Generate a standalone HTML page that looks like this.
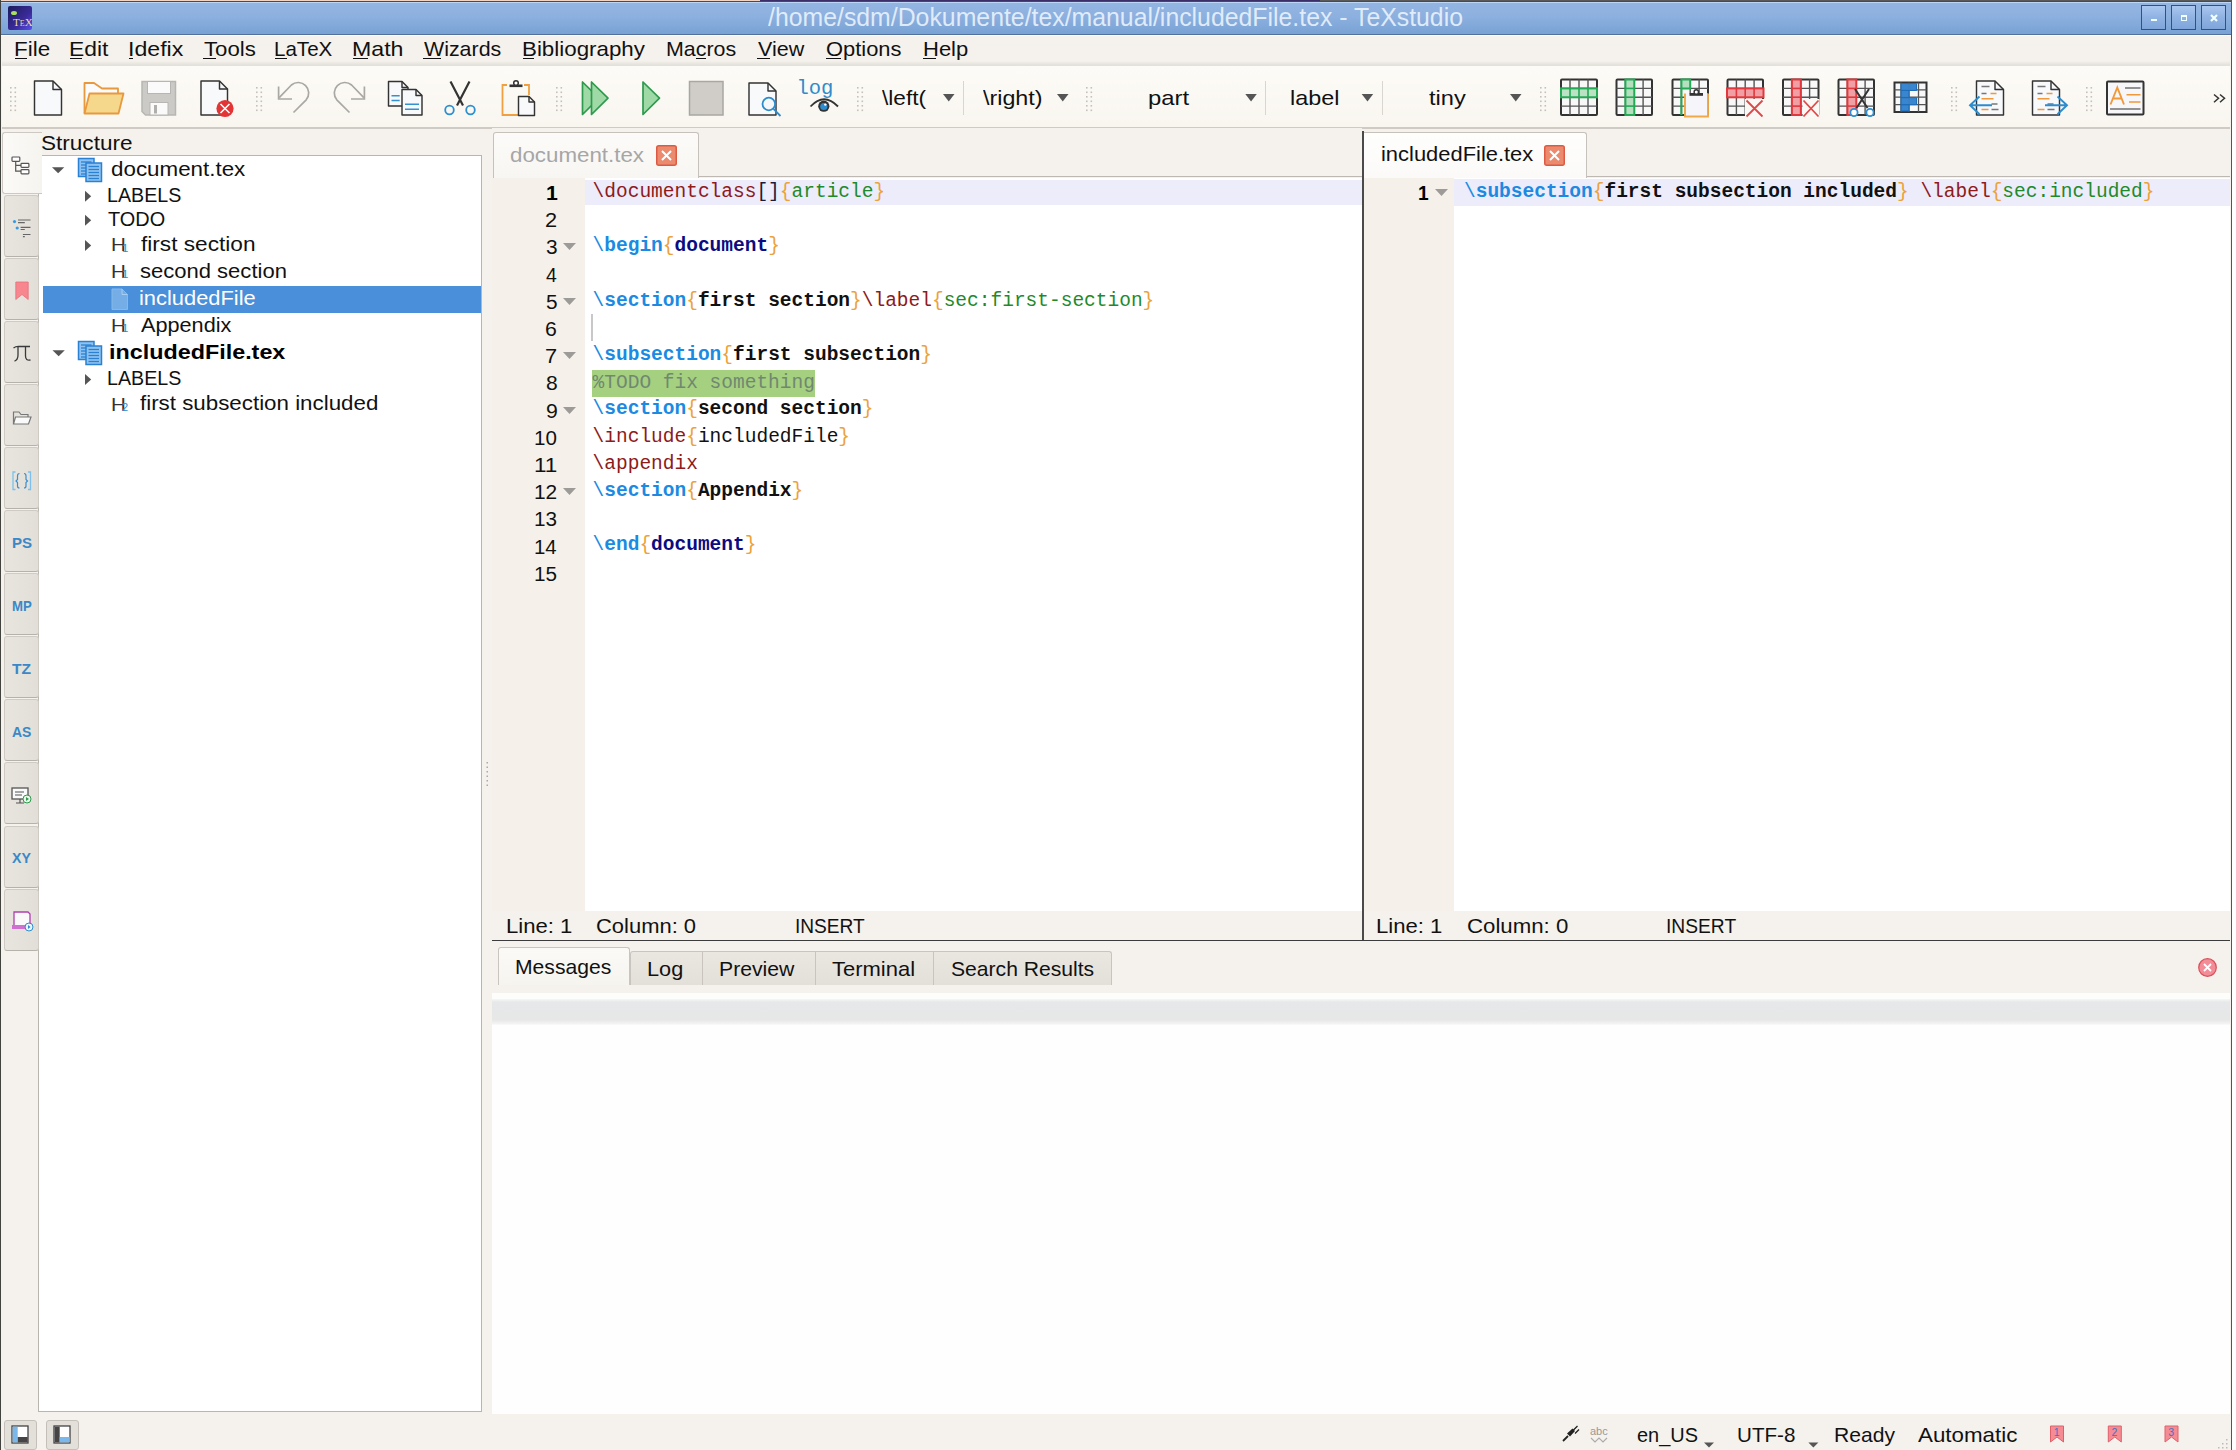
<!DOCTYPE html><html><head><meta charset="utf-8"><style>
html,body{margin:0;padding:0;width:2236px;height:1450px;overflow:hidden;position:relative}
.t{position:absolute;line-height:0;white-space:pre}
</style></head><body>
<div style="position:absolute;left:0px;top:0px;width:2236px;height:1450px;background:#f5f1ec"></div>
<div style="position:absolute;left:2232px;top:0px;width:4px;height:1450px;background:#fff"></div>
<div style="position:absolute;left:0px;top:0px;width:760px;height:1.2px;background:#f2d2c0"></div>
<div style="position:absolute;left:760px;top:0px;width:560px;height:1.2px;background:#3c2e66"></div>
<div style="position:absolute;left:1320px;top:0px;width:912px;height:1.2px;background:#5a5a5a"></div>
<div style="position:absolute;left:0px;top:1.2px;width:2232px;height:1px;background:#4a4a4a"></div>
<div style="position:absolute;left:0px;top:2.2px;width:2232px;height:1px;background:#bcd6f8"></div>
<div style="position:absolute;left:0px;top:3.2px;width:2232px;height:30.8px;background:linear-gradient(#93b5e2,#8cb0df 45%,#78a2d4)"></div>
<div style="position:absolute;left:0px;top:34px;width:2232px;height:1px;background:#52709a"></div>
<div style="position:absolute;left:0px;top:35px;width:2232px;height:1px;background:#fbfdfd"></div>
<div style="position:absolute;left:0px;top:0px;width:1.2px;height:1450px;background:#42423e"></div>
<div style="position:absolute;left:2231px;top:0px;width:1.2px;height:1450px;background:#555552"></div>
<svg style="position:absolute;left:8px;top:6px" width="24" height="24"><defs><linearGradient id="ti" x1="0" y1="0" x2="1" y2="1"><stop offset="0" stop-color="#1c1c5a"/><stop offset="0.6" stop-color="#3a2a9a"/><stop offset="1" stop-color="#5a50f0"/></linearGradient></defs><rect x="0" y="0" width="24" height="24" rx="2" fill="url(#ti)"/><ellipse cx="6" cy="7" rx="3" ry="2" fill="#a8e060"/><text x="5" y="20" font-family="Liberation Serif" font-size="11" fill="#f0d8a0">T<tspan font-size="8">E</tspan>X</text></svg>
<div class="t" style="left:768.00px;top:17.19px;font-family:'Liberation Sans', sans-serif;font-size:26px;color:rgba(244,250,255,0.82);transform:scaleX(0.9548);transform-origin:0 0;">/home/sdm/Dokumente/tex/manual/includedFile.tex - TeXstudio</div>
<div style="position:absolute;left:2141px;top:5px;width:25px;height:25px;box-sizing:border-box;border:1.5px solid #2f5285;background:linear-gradient(#aac6f0,#8fb2e2 50%,#7fa5da)"></div>
<div style="position:absolute;left:2171px;top:5px;width:25px;height:25px;box-sizing:border-box;border:1.5px solid #2f5285;background:linear-gradient(#aac6f0,#8fb2e2 50%,#7fa5da)"></div>
<div style="position:absolute;left:2201px;top:5px;width:25px;height:25px;box-sizing:border-box;border:1.5px solid #2f5285;background:linear-gradient(#aac6f0,#8fb2e2 50%,#7fa5da)"></div>
<div style="position:absolute;left:2150.8px;top:18.9px;width:6.4px;height:2.4px;background:#f0ffff"></div>
<div style="position:absolute;left:2181px;top:15.2px;width:6.2px;height:6px;box-sizing:border-box;border:1.5px solid #f0ffff;border-top-width:2px"></div>
<svg style="position:absolute;left:2209px;top:13px" width="10" height="10"><path d="M2 2L8 8M8 2L2 8" stroke="#f0ffff" stroke-width="2.2"/></svg>
<div class="t" style="left:13.71px;top:48.77px;font-family:'Liberation Sans', sans-serif;font-size:20.3px;color:#111;transform:scaleX(1.1046);transform-origin:0 0;">File</div>
<div class="t" style="left:68.77px;top:48.77px;font-family:'Liberation Sans', sans-serif;font-size:20.3px;color:#111;transform:scaleX(1.1268);transform-origin:0 0;">Edit</div>
<div class="t" style="left:127.92px;top:48.77px;font-family:'Liberation Sans', sans-serif;font-size:20.3px;color:#111;transform:scaleX(1.1401);transform-origin:0 0;">Idefix</div>
<div class="t" style="left:203.56px;top:48.77px;font-family:'Liberation Sans', sans-serif;font-size:20.3px;color:#111;transform:scaleX(1.0954);transform-origin:0 0;">Tools</div>
<div class="t" style="left:273.85px;top:48.77px;font-family:'Liberation Sans', sans-serif;font-size:20.3px;color:#111;transform:scaleX(1.0140);transform-origin:0 0;">LaTeX</div>
<div class="t" style="left:352.05px;top:48.77px;font-family:'Liberation Sans', sans-serif;font-size:20.3px;color:#111;transform:scaleX(1.1419);transform-origin:0 0;">Math</div>
<div class="t" style="left:424.39px;top:48.77px;font-family:'Liberation Sans', sans-serif;font-size:20.3px;color:#111;transform:scaleX(1.0542);transform-origin:0 0;">Wizards</div>
<div class="t" style="left:521.61px;top:48.77px;font-family:'Liberation Sans', sans-serif;font-size:20.3px;color:#111;transform:scaleX(1.1015);transform-origin:0 0;">Bibliography</div>
<div class="t" style="left:666.49px;top:48.77px;font-family:'Liberation Sans', sans-serif;font-size:20.3px;color:#111;transform:scaleX(1.0553);transform-origin:0 0;">Macros</div>
<div class="t" style="left:757.79px;top:48.77px;font-family:'Liberation Sans', sans-serif;font-size:20.3px;color:#111;transform:scaleX(1.0587);transform-origin:0 0;">View</div>
<div class="t" style="left:825.81px;top:48.77px;font-family:'Liberation Sans', sans-serif;font-size:20.3px;color:#111;transform:scaleX(1.0804);transform-origin:0 0;">Options</div>
<div class="t" style="left:922.64px;top:48.77px;font-family:'Liberation Sans', sans-serif;font-size:20.3px;color:#111;transform:scaleX(1.0845);transform-origin:0 0;">Help</div>
<div style="position:absolute;left:15px;top:57.5px;width:12px;height:1.6px;background:#111"></div>
<div style="position:absolute;left:70px;top:57.5px;width:12px;height:1.6px;background:#111"></div>
<div style="position:absolute;left:129px;top:57.5px;width:4px;height:1.6px;background:#111"></div>
<div style="position:absolute;left:203px;top:57.5px;width:13px;height:1.6px;background:#111"></div>
<div style="position:absolute;left:275px;top:57.5px;width:12px;height:1.6px;background:#111"></div>
<div style="position:absolute;left:353px;top:57.5px;width:15px;height:1.6px;background:#111"></div>
<div style="position:absolute;left:423px;top:57.5px;width:18px;height:1.6px;background:#111"></div>
<div style="position:absolute;left:523px;top:57.5px;width:11px;height:1.6px;background:#111"></div>
<div style="position:absolute;left:696px;top:57.5px;width:10px;height:1.6px;background:#111"></div>
<div style="position:absolute;left:757px;top:57.5px;width:13px;height:1.6px;background:#111"></div>
<div style="position:absolute;left:826px;top:57.5px;width:15px;height:1.6px;background:#111"></div>
<div style="position:absolute;left:923px;top:57.5px;width:13px;height:1.6px;background:#111"></div>
<div style="position:absolute;left:2px;top:61px;width:2228px;height:6px;background:linear-gradient(#f4f1eb,#e4e0d9 70%,#ebe8e2)"></div>
<div style="position:absolute;left:2px;top:66px;width:2228px;height:61px;background:linear-gradient(#fdfbf7,#f9f6f0)"></div>
<div style="position:absolute;left:2px;top:127px;width:2228px;height:1.5px;background:#cfcbc4"></div>
<svg style="position:absolute;left:0;top:0" width="2236" height="130"><rect x="10" y="87.0" width="1.6" height="1.6" fill="#c4c1bb"/><rect x="14.5" y="87.0" width="1.6" height="1.6" fill="#c4c1bb"/><rect x="10" y="91.5" width="1.6" height="1.6" fill="#c4c1bb"/><rect x="14.5" y="91.5" width="1.6" height="1.6" fill="#c4c1bb"/><rect x="10" y="96.0" width="1.6" height="1.6" fill="#c4c1bb"/><rect x="14.5" y="96.0" width="1.6" height="1.6" fill="#c4c1bb"/><rect x="10" y="100.5" width="1.6" height="1.6" fill="#c4c1bb"/><rect x="14.5" y="100.5" width="1.6" height="1.6" fill="#c4c1bb"/><rect x="10" y="105.0" width="1.6" height="1.6" fill="#c4c1bb"/><rect x="14.5" y="105.0" width="1.6" height="1.6" fill="#c4c1bb"/><rect x="10" y="109.5" width="1.6" height="1.6" fill="#c4c1bb"/><rect x="14.5" y="109.5" width="1.6" height="1.6" fill="#c4c1bb"/><path d="M34.5 81H53.0L61.5 89.5V115H34.5Z" fill="#f8f9fb" stroke="#333" stroke-width="1.45" stroke-linejoin="round"/><path d="M53.0 81V89.5H61.5" fill="none" stroke="#333" stroke-width="1.45" stroke-linejoin="round"/><path d="M84.5 113V83H94L102 88.5H118V93" fill="#fbfbfb" stroke="#e8983e" stroke-width="1.8" stroke-linejoin="round"/><path d="M89.5 93.5H123.5L118.5 113.5H84.5Z" fill="#f6d88c" stroke="#e8983e" stroke-width="1.8" stroke-linejoin="round"/><path d="M142 81.5H175.5V115H145.5L142 111.5Z" fill="#cbcac6" stroke="#b7b6b2" stroke-width="1.5"/><rect x="147.5" y="81.5" width="23" height="12" fill="#fafafa" stroke="#b7b6b2" stroke-width="1"/><rect x="150" y="102.5" width="18" height="12.5" fill="#fafafa" stroke="#b7b6b2" stroke-width="1"/><rect x="154" y="105" width="3" height="8.5" fill="#b0afab"/><path d="M201 81H219.5L227.5 89V115H201Z" fill="#f8f9fb" stroke="#333" stroke-width="1.45" stroke-linejoin="round"/><path d="M219.5 81V89H227.5" fill="none" stroke="#333" stroke-width="1.45" stroke-linejoin="round"/><circle cx="225" cy="108.5" r="8.6" fill="#e33535"/><path d="M220.5 104L229.5 113M229.5 104L220.5 113" stroke="#fff" stroke-width="1.6"/><rect x="256" y="87.0" width="1.6" height="1.6" fill="#c4c1bb"/><rect x="260.5" y="87.0" width="1.6" height="1.6" fill="#c4c1bb"/><rect x="256" y="91.5" width="1.6" height="1.6" fill="#c4c1bb"/><rect x="260.5" y="91.5" width="1.6" height="1.6" fill="#c4c1bb"/><rect x="256" y="96.0" width="1.6" height="1.6" fill="#c4c1bb"/><rect x="260.5" y="96.0" width="1.6" height="1.6" fill="#c4c1bb"/><rect x="256" y="100.5" width="1.6" height="1.6" fill="#c4c1bb"/><rect x="260.5" y="100.5" width="1.6" height="1.6" fill="#c4c1bb"/><rect x="256" y="105.0" width="1.6" height="1.6" fill="#c4c1bb"/><rect x="260.5" y="105.0" width="1.6" height="1.6" fill="#c4c1bb"/><rect x="256" y="109.5" width="1.6" height="1.6" fill="#c4c1bb"/><rect x="260.5" y="109.5" width="1.6" height="1.6" fill="#c4c1bb"/><path d="M279.2 97.6L291.4 85A10.5 10.5 0 0 1 306.2 99.8L293.5 112.5" fill="none" stroke="#a9a8a4" stroke-width="1.7"/><path d="M278.6 86.5V99H292" fill="none" stroke="#a9a8a4" stroke-width="1.7"/><path d="M363.8 97.6L351.6 85A10.5 10.5 0 0 0 336.8 99.8L349.5 112.5" fill="none" stroke="#a9a8a4" stroke-width="1.7"/><path d="M364.4 86.5V99H351" fill="none" stroke="#a9a8a4" stroke-width="1.7"/><path d="M388.5 81.5H402L408 87.5V106H388.5Z" fill="#f8f9fb" stroke="#333" stroke-width="1.45" stroke-linejoin="round"/><path d="M402 81.5V87.5H408" fill="none" stroke="#333" stroke-width="1.45" stroke-linejoin="round"/><path d="M391.5 95.7H399.7M391.5 100.4H399.7" stroke="#3590d0" stroke-width="1.5"/><path d="M402 89.5H416L422 95.5V115H402Z" fill="#f8f9fb" stroke="#333" stroke-width="1.45" stroke-linejoin="round"/><path d="M416 89.5V95.5H422" fill="none" stroke="#333" stroke-width="1.45" stroke-linejoin="round"/><path d="M405 104.3H419M405 109.3H419" stroke="#3590d0" stroke-width="1.6"/><path d="M450.5 81.5L463 105.5M469.5 81.5L457 105.5" stroke="#333" stroke-width="2.2"/><circle cx="449.5" cy="110" r="4.3" fill="none" stroke="#2d8fd0" stroke-width="1.8"/><circle cx="470.5" cy="110" r="4.3" fill="none" stroke="#2d8fd0" stroke-width="1.8"/><path d="M507 85H502.5V115H518M524 85H529V95" fill="none" stroke="#f0a040" stroke-width="1.8"/><rect x="509.5" y="84.5" width="13" height="2.6" fill="#333"/><circle cx="516" cy="83" r="2.3" fill="#fff" stroke="#333" stroke-width="1.5"/><path d="M518.5 96.5H529.0L534.5 102.0V115.5H518.5Z" fill="#f8f9fb" stroke="#333" stroke-width="1.45" stroke-linejoin="round"/><path d="M529.0 96.5V102.0H534.5" fill="none" stroke="#333" stroke-width="1.45" stroke-linejoin="round"/><rect x="556" y="87.0" width="1.6" height="1.6" fill="#c4c1bb"/><rect x="560.5" y="87.0" width="1.6" height="1.6" fill="#c4c1bb"/><rect x="556" y="91.5" width="1.6" height="1.6" fill="#c4c1bb"/><rect x="560.5" y="91.5" width="1.6" height="1.6" fill="#c4c1bb"/><rect x="556" y="96.0" width="1.6" height="1.6" fill="#c4c1bb"/><rect x="560.5" y="96.0" width="1.6" height="1.6" fill="#c4c1bb"/><rect x="556" y="100.5" width="1.6" height="1.6" fill="#c4c1bb"/><rect x="560.5" y="100.5" width="1.6" height="1.6" fill="#c4c1bb"/><rect x="556" y="105.0" width="1.6" height="1.6" fill="#c4c1bb"/><rect x="560.5" y="105.0" width="1.6" height="1.6" fill="#c4c1bb"/><rect x="556" y="109.5" width="1.6" height="1.6" fill="#c4c1bb"/><rect x="560.5" y="109.5" width="1.6" height="1.6" fill="#c4c1bb"/><path d="M582.5 82V114.5L599 98.2Z" fill="#9fdaa6" stroke="#2e9a4e" stroke-width="1.7" stroke-linejoin="round"/><path d="M591.5 82V114.5L608 98.2Z" fill="#9fdaa6" stroke="#2e9a4e" stroke-width="1.7" stroke-linejoin="round"/><path d="M643 82V114.5L659.5 98.2Z" fill="#9fdaa6" stroke="#2e9a4e" stroke-width="1.7" stroke-linejoin="round"/><rect x="689.5" y="81.5" width="33.5" height="33.5" fill="#d0cdc8" stroke="#a9a7a3" stroke-width="1.5"/><path d="M749 83H768L776 91V115H749Z" fill="#f8f9fb" stroke="#333" stroke-width="1.45" stroke-linejoin="round"/><path d="M768 83V91H776" fill="none" stroke="#333" stroke-width="1.45" stroke-linejoin="round"/><circle cx="768.8" cy="104" r="6.3" fill="#f6f7f9" stroke="#2d8ccd" stroke-width="1.8"/><path d="M773.5 108.8L780.5 116" stroke="#2d8ccd" stroke-width="1.8"/><text x="796.5" y="94.2" font-family="Liberation Mono" font-size="20.5" fill="#2f8bcb">log</text><path d="M810.5 106.5Q824 92 838 106.5" fill="none" stroke="#333" stroke-width="1.8"/><circle cx="823.8" cy="106.2" r="5.6" fill="#333"/><circle cx="823.8" cy="106.5" r="3.6" fill="#2d8ccd"/><circle cx="825.3" cy="104.6" r="1.2" fill="#fff"/><rect x="857" y="87.0" width="1.6" height="1.6" fill="#c4c1bb"/><rect x="861.5" y="87.0" width="1.6" height="1.6" fill="#c4c1bb"/><rect x="857" y="91.5" width="1.6" height="1.6" fill="#c4c1bb"/><rect x="861.5" y="91.5" width="1.6" height="1.6" fill="#c4c1bb"/><rect x="857" y="96.0" width="1.6" height="1.6" fill="#c4c1bb"/><rect x="861.5" y="96.0" width="1.6" height="1.6" fill="#c4c1bb"/><rect x="857" y="100.5" width="1.6" height="1.6" fill="#c4c1bb"/><rect x="861.5" y="100.5" width="1.6" height="1.6" fill="#c4c1bb"/><rect x="857" y="105.0" width="1.6" height="1.6" fill="#c4c1bb"/><rect x="861.5" y="105.0" width="1.6" height="1.6" fill="#c4c1bb"/><rect x="857" y="109.5" width="1.6" height="1.6" fill="#c4c1bb"/><rect x="861.5" y="109.5" width="1.6" height="1.6" fill="#c4c1bb"/><line x1="963.5" y1="81" x2="963.5" y2="115" stroke="#d9d6d0" stroke-width="1"/><line x1="1265.5" y1="81" x2="1265.5" y2="115" stroke="#d9d6d0" stroke-width="1"/><line x1="1382.5" y1="81" x2="1382.5" y2="115" stroke="#d9d6d0" stroke-width="1"/><path d="M943 94H954.5L948.75 101.4Z" fill="#555"/><path d="M1057 94H1068.5L1062.75 101.4Z" fill="#555"/><path d="M1245.3 94H1256.8L1251.05 101.4Z" fill="#555"/><path d="M1361.7 94H1373.2L1367.45 101.4Z" fill="#555"/><path d="M1510 94H1521.5L1515.75 101.4Z" fill="#555"/><rect x="1086" y="87.0" width="1.6" height="1.6" fill="#c4c1bb"/><rect x="1090.5" y="87.0" width="1.6" height="1.6" fill="#c4c1bb"/><rect x="1086" y="91.5" width="1.6" height="1.6" fill="#c4c1bb"/><rect x="1090.5" y="91.5" width="1.6" height="1.6" fill="#c4c1bb"/><rect x="1086" y="96.0" width="1.6" height="1.6" fill="#c4c1bb"/><rect x="1090.5" y="96.0" width="1.6" height="1.6" fill="#c4c1bb"/><rect x="1086" y="100.5" width="1.6" height="1.6" fill="#c4c1bb"/><rect x="1090.5" y="100.5" width="1.6" height="1.6" fill="#c4c1bb"/><rect x="1086" y="105.0" width="1.6" height="1.6" fill="#c4c1bb"/><rect x="1090.5" y="105.0" width="1.6" height="1.6" fill="#c4c1bb"/><rect x="1086" y="109.5" width="1.6" height="1.6" fill="#c4c1bb"/><rect x="1090.5" y="109.5" width="1.6" height="1.6" fill="#c4c1bb"/><rect x="1540" y="87.0" width="1.6" height="1.6" fill="#c4c1bb"/><rect x="1544.5" y="87.0" width="1.6" height="1.6" fill="#c4c1bb"/><rect x="1540" y="91.5" width="1.6" height="1.6" fill="#c4c1bb"/><rect x="1544.5" y="91.5" width="1.6" height="1.6" fill="#c4c1bb"/><rect x="1540" y="96.0" width="1.6" height="1.6" fill="#c4c1bb"/><rect x="1544.5" y="96.0" width="1.6" height="1.6" fill="#c4c1bb"/><rect x="1540" y="100.5" width="1.6" height="1.6" fill="#c4c1bb"/><rect x="1544.5" y="100.5" width="1.6" height="1.6" fill="#c4c1bb"/><rect x="1540" y="105.0" width="1.6" height="1.6" fill="#c4c1bb"/><rect x="1544.5" y="105.0" width="1.6" height="1.6" fill="#c4c1bb"/><rect x="1540" y="109.5" width="1.6" height="1.6" fill="#c4c1bb"/><rect x="1544.5" y="109.5" width="1.6" height="1.6" fill="#c4c1bb"/><rect x="1561" y="79.5" width="36" height="35.5" fill="#f8f8f8" stroke="#333" stroke-width="2" rx="1"/><line x1="1570.0" y1="79.5" x2="1570.0" y2="115" stroke="#555" stroke-width="1.4"/><line x1="1579.0" y1="79.5" x2="1579.0" y2="115" stroke="#555" stroke-width="1.4"/><line x1="1588.0" y1="79.5" x2="1588.0" y2="115" stroke="#555" stroke-width="1.4"/><line x1="1561" y1="88.4" x2="1597" y2="88.4" stroke="#555" stroke-width="1.4"/><line x1="1561" y1="97.2" x2="1597" y2="97.2" stroke="#555" stroke-width="1.4"/><line x1="1561" y1="106.1" x2="1597" y2="106.1" stroke="#555" stroke-width="1.4"/><rect x="1561" y="88.4" width="36" height="8.9" fill="#b5dfbe" fill-opacity="0.9" stroke="#22aa55" stroke-width="2"/><line x1="1570.0" y1="88.4" x2="1570.0" y2="97.2" stroke="#22aa55" stroke-width="1.6"/><line x1="1579.0" y1="88.4" x2="1579.0" y2="97.2" stroke="#22aa55" stroke-width="1.6"/><line x1="1588.0" y1="88.4" x2="1588.0" y2="97.2" stroke="#22aa55" stroke-width="1.6"/><rect x="1616.5" y="79.5" width="35.5" height="35.5" fill="#f8f8f8" stroke="#333" stroke-width="2" rx="1"/><line x1="1625.4" y1="79.5" x2="1625.4" y2="115" stroke="#555" stroke-width="1.4"/><line x1="1634.2" y1="79.5" x2="1634.2" y2="115" stroke="#555" stroke-width="1.4"/><line x1="1643.1" y1="79.5" x2="1643.1" y2="115" stroke="#555" stroke-width="1.4"/><line x1="1616.5" y1="88.4" x2="1652" y2="88.4" stroke="#555" stroke-width="1.4"/><line x1="1616.5" y1="97.2" x2="1652" y2="97.2" stroke="#555" stroke-width="1.4"/><line x1="1616.5" y1="106.1" x2="1652" y2="106.1" stroke="#555" stroke-width="1.4"/><rect x="1625.4" y="79.5" width="8.9" height="35.5" fill="#b5dfbe" stroke="#22aa55" stroke-width="2"/><line x1="1625.4" y1="88.4" x2="1634.2" y2="88.4" stroke="#22aa55" stroke-width="1.6"/><line x1="1625.4" y1="97.2" x2="1634.2" y2="97.2" stroke="#22aa55" stroke-width="1.6"/><line x1="1625.4" y1="106.1" x2="1634.2" y2="106.1" stroke="#22aa55" stroke-width="1.6"/><rect x="1672.5" y="79.5" width="35.5" height="35.5" fill="#f8f8f8" stroke="#333" stroke-width="2" rx="1"/><line x1="1681.4" y1="79.5" x2="1681.4" y2="115" stroke="#555" stroke-width="1.4"/><line x1="1690.2" y1="79.5" x2="1690.2" y2="115" stroke="#555" stroke-width="1.4"/><line x1="1699.1" y1="79.5" x2="1699.1" y2="115" stroke="#555" stroke-width="1.4"/><line x1="1672.5" y1="88.4" x2="1708" y2="88.4" stroke="#555" stroke-width="1.4"/><line x1="1672.5" y1="97.2" x2="1708" y2="97.2" stroke="#555" stroke-width="1.4"/><line x1="1672.5" y1="106.1" x2="1708" y2="106.1" stroke="#555" stroke-width="1.4"/><path d="M1681.4 115V79.5H1690.2V88.4H1681.4" fill="#b5dfbe" stroke="#22aa55" stroke-width="2"/><path d="M1685 93.5V116.5H1708V93.5" fill="#f6f6fa" stroke="#f0a848" stroke-width="1.9"/><rect x="1689.5" y="93" width="13.5" height="2.8" fill="#333"/><circle cx="1696.3" cy="92" r="2.2" fill="#fff" stroke="#333" stroke-width="1.4"/><rect x="1727.5" y="79.5" width="35.5" height="35.5" fill="#f8f8f8" stroke="#333" stroke-width="2" rx="1"/><line x1="1736.4" y1="79.5" x2="1736.4" y2="115" stroke="#555" stroke-width="1.4"/><line x1="1745.2" y1="79.5" x2="1745.2" y2="115" stroke="#555" stroke-width="1.4"/><line x1="1754.1" y1="79.5" x2="1754.1" y2="115" stroke="#555" stroke-width="1.4"/><line x1="1727.5" y1="88.4" x2="1763" y2="88.4" stroke="#555" stroke-width="1.4"/><line x1="1727.5" y1="97.2" x2="1763" y2="97.2" stroke="#555" stroke-width="1.4"/><line x1="1727.5" y1="106.1" x2="1763" y2="106.1" stroke="#555" stroke-width="1.4"/><rect x="1727" y="88.4" width="36.5" height="8.9" fill="#f0a0a4" stroke="#e0383c" stroke-width="2"/><line x1="1736.4" y1="88.4" x2="1736.4" y2="97.2" stroke="#e0383c" stroke-width="1.6"/><line x1="1745.2" y1="88.4" x2="1745.2" y2="97.2" stroke="#e0383c" stroke-width="1.6"/><line x1="1754.1" y1="88.4" x2="1754.1" y2="97.2" stroke="#e0383c" stroke-width="1.6"/><rect x="1745" y="99" width="19" height="19" fill="#faf8f4"/><path d="M1746.5 100.5L1762.5 116.5M1762.5 100.5L1746.5 116.5" stroke="#e04848" stroke-width="1.8"/><rect x="1783" y="79.5" width="35.5" height="35.5" fill="#f8f8f8" stroke="#333" stroke-width="2" rx="1"/><line x1="1791.9" y1="79.5" x2="1791.9" y2="115" stroke="#555" stroke-width="1.4"/><line x1="1800.8" y1="79.5" x2="1800.8" y2="115" stroke="#555" stroke-width="1.4"/><line x1="1809.6" y1="79.5" x2="1809.6" y2="115" stroke="#555" stroke-width="1.4"/><line x1="1783" y1="88.4" x2="1818.5" y2="88.4" stroke="#555" stroke-width="1.4"/><line x1="1783" y1="97.2" x2="1818.5" y2="97.2" stroke="#555" stroke-width="1.4"/><line x1="1783" y1="106.1" x2="1818.5" y2="106.1" stroke="#555" stroke-width="1.4"/><rect x="1791.9" y="79.5" width="8.9" height="35.5" fill="#f0a0a4" stroke="#e0383c" stroke-width="2"/><line x1="1791.9" y1="88.4" x2="1800.8" y2="88.4" stroke="#e0383c" stroke-width="1.6"/><line x1="1791.9" y1="97.2" x2="1800.8" y2="97.2" stroke="#e0383c" stroke-width="1.6"/><line x1="1791.9" y1="106.1" x2="1800.8" y2="106.1" stroke="#e0383c" stroke-width="1.6"/><rect x="1802.5" y="99" width="17" height="19" fill="#faf8f4"/><path d="M1803.5 100.5L1818.5 116.5M1818.5 100.5L1803.5 116.5" stroke="#e04848" stroke-width="1.8"/><rect x="1838.5" y="79.5" width="35.5" height="35.5" fill="#f8f8f8" stroke="#333" stroke-width="2" rx="1"/><line x1="1847.4" y1="79.5" x2="1847.4" y2="115" stroke="#555" stroke-width="1.4"/><line x1="1856.2" y1="79.5" x2="1856.2" y2="115" stroke="#555" stroke-width="1.4"/><line x1="1865.1" y1="79.5" x2="1865.1" y2="115" stroke="#555" stroke-width="1.4"/><line x1="1838.5" y1="88.4" x2="1874" y2="88.4" stroke="#555" stroke-width="1.4"/><line x1="1838.5" y1="97.2" x2="1874" y2="97.2" stroke="#555" stroke-width="1.4"/><line x1="1838.5" y1="106.1" x2="1874" y2="106.1" stroke="#555" stroke-width="1.4"/><rect x="1847.4" y="79.5" width="8.9" height="35.5" fill="#f0a0a4" stroke="#e0383c" stroke-width="2"/><line x1="1847.4" y1="88.4" x2="1856.2" y2="88.4" stroke="#e0383c" stroke-width="1.6"/><line x1="1847.4" y1="97.2" x2="1856.2" y2="97.2" stroke="#e0383c" stroke-width="1.6"/><line x1="1847.4" y1="106.1" x2="1856.2" y2="106.1" stroke="#e0383c" stroke-width="1.6"/><path d="M1855 89L1867.5 108M1869 89L1856.5 108" stroke="#333" stroke-width="2"/><circle cx="1854" cy="112.5" r="3.6" fill="#fff" stroke="#2d8fd0" stroke-width="1.8"/><circle cx="1870" cy="112.5" r="3.6" fill="#fff" stroke="#2d8fd0" stroke-width="1.8"/><rect x="1894.5" y="82.5" width="32" height="29.5" fill="#f8f8f8" stroke="#333" stroke-width="2"/><path d="M1901 83.5H1916.5V90.5H1901ZM1901 90.5H1909V97.6H1901ZM1901 97.6H1916.5V104.7H1901ZM1901 104.7H1909V111H1901Z" fill="#3a86d0"/><line x1="1894.5" y1="89.9" x2="1926.5" y2="89.9" stroke="#555" stroke-width="1.3"/><line x1="1894.5" y1="97.2" x2="1926.5" y2="97.2" stroke="#555" stroke-width="1.3"/><line x1="1894.5" y1="104.6" x2="1926.5" y2="104.6" stroke="#555" stroke-width="1.3"/><line x1="1901" y1="82.5" x2="1901" y2="112" stroke="#555" stroke-width="1.3"/><line x1="1909" y1="82.5" x2="1909" y2="112" stroke="#555" stroke-width="1.3"/><line x1="1918.5" y1="82.5" x2="1918.5" y2="112" stroke="#555" stroke-width="1.3"/><path d="M1901 83.5H1916.5V90.5H1901ZM1901 90.5H1909V97.6H1901ZM1901 97.6H1916.5V104.7H1901ZM1901 104.7H1909V111H1901Z" fill="#3a86d0" fill-opacity="0.85" stroke="#1f6db8" stroke-width="1"/><rect x="1951" y="87.0" width="1.6" height="1.6" fill="#c4c1bb"/><rect x="1955.5" y="87.0" width="1.6" height="1.6" fill="#c4c1bb"/><rect x="1951" y="91.5" width="1.6" height="1.6" fill="#c4c1bb"/><rect x="1955.5" y="91.5" width="1.6" height="1.6" fill="#c4c1bb"/><rect x="1951" y="96.0" width="1.6" height="1.6" fill="#c4c1bb"/><rect x="1955.5" y="96.0" width="1.6" height="1.6" fill="#c4c1bb"/><rect x="1951" y="100.5" width="1.6" height="1.6" fill="#c4c1bb"/><rect x="1955.5" y="100.5" width="1.6" height="1.6" fill="#c4c1bb"/><rect x="1951" y="105.0" width="1.6" height="1.6" fill="#c4c1bb"/><rect x="1955.5" y="105.0" width="1.6" height="1.6" fill="#c4c1bb"/><rect x="1951" y="109.5" width="1.6" height="1.6" fill="#c4c1bb"/><rect x="1955.5" y="109.5" width="1.6" height="1.6" fill="#c4c1bb"/><path d="M1976.5 81H1995.0L2003.5 89.5V115H1976.5Z" fill="#f8f9fb" stroke="#333" stroke-width="1.45" stroke-linejoin="round"/><path d="M1995.0 81V89.5H2003.5" fill="none" stroke="#333" stroke-width="1.45" stroke-linejoin="round"/><path d="M1981.5 86.5H1989.5M1981.5 93.5H1986.5" stroke="#777" stroke-width="1.4"/><path d="M1990.5 93.5H1996.5M1981.5 98.8H1993.5M1981.5 109.5H1988.5" stroke="#f0983a" stroke-width="1.4"/><path d="M1991.5 104H1997.5M1991.5 109.5H1998.5" stroke="#777" stroke-width="1.4"/><path d="M1979.5 96.5L1970 105.3L1979.5 114.3M1970 105.3H1992" fill="none" stroke="#2d8ccd" stroke-width="1.9"/><path d="M2032.5 81H2051.0L2059.5 89.5V115H2032.5Z" fill="#f8f9fb" stroke="#333" stroke-width="1.45" stroke-linejoin="round"/><path d="M2051.0 81V89.5H2059.5" fill="none" stroke="#333" stroke-width="1.45" stroke-linejoin="round"/><path d="M2037.5 86.5H2045.5M2037.5 93.5H2042.5" stroke="#777" stroke-width="1.4"/><path d="M2046.5 93.5H2052.5M2037.5 98.8H2049.5M2037.5 109.5H2044.5" stroke="#f0983a" stroke-width="1.4"/><path d="M2047.5 104H2053.5M2047.5 109.5H2054.5" stroke="#777" stroke-width="1.4"/><path d="M2057.5 96.5L2067 105.3L2057.5 114.3M2067 105.3H2045" fill="none" stroke="#2d8ccd" stroke-width="1.9"/><rect x="2086" y="87.0" width="1.6" height="1.6" fill="#c4c1bb"/><rect x="2090.5" y="87.0" width="1.6" height="1.6" fill="#c4c1bb"/><rect x="2086" y="91.5" width="1.6" height="1.6" fill="#c4c1bb"/><rect x="2090.5" y="91.5" width="1.6" height="1.6" fill="#c4c1bb"/><rect x="2086" y="96.0" width="1.6" height="1.6" fill="#c4c1bb"/><rect x="2090.5" y="96.0" width="1.6" height="1.6" fill="#c4c1bb"/><rect x="2086" y="100.5" width="1.6" height="1.6" fill="#c4c1bb"/><rect x="2090.5" y="100.5" width="1.6" height="1.6" fill="#c4c1bb"/><rect x="2086" y="105.0" width="1.6" height="1.6" fill="#c4c1bb"/><rect x="2090.5" y="105.0" width="1.6" height="1.6" fill="#c4c1bb"/><rect x="2086" y="109.5" width="1.6" height="1.6" fill="#c4c1bb"/><rect x="2090.5" y="109.5" width="1.6" height="1.6" fill="#c4c1bb"/><rect x="2107" y="81.5" width="36.5" height="33" fill="#f7f7f9" stroke="#333" stroke-width="2" rx="1"/><path d="M2110.5 104.5L2117.3 87.5L2124 104.5M2112.8 98.5H2121.8" fill="none" stroke="#f0983a" stroke-width="1.9"/><path d="M2125 88H2140.5" stroke="#777" stroke-width="1.6"/><path d="M2126.5 94.8H2140.5M2129 102H2140.5" stroke="#f0983a" stroke-width="1.6"/><path d="M2110 109H2140.5" stroke="#777" stroke-width="1.6"/><path d="M2214 94.5L2218.5 98.3L2214 102.2M2220 94.5L2224.5 98.3L2220 102.2" fill="none" stroke="#333" stroke-width="1.5"/></svg>
<div class="t" style="left:882.00px;top:97.97px;font-family:'Liberation Sans', sans-serif;font-size:20.3px;color:#111;transform:scaleX(1.1176);transform-origin:0 0;">\left(</div>
<div class="t" style="left:983.00px;top:97.97px;font-family:'Liberation Sans', sans-serif;font-size:20.3px;color:#111;transform:scaleX(1.1491);transform-origin:0 0;">\right)</div>
<div class="t" style="left:1148.45px;top:97.97px;font-family:'Liberation Sans', sans-serif;font-size:20.3px;color:#111;transform:scaleX(1.1763);transform-origin:0 0;">part</div>
<div class="t" style="left:1290.08px;top:97.97px;font-family:'Liberation Sans', sans-serif;font-size:20.3px;color:#111;transform:scaleX(1.1544);transform-origin:0 0;">label</div>
<div class="t" style="left:1428.95px;top:97.97px;font-family:'Liberation Sans', sans-serif;font-size:20.3px;color:#111;transform:scaleX(1.1644);transform-origin:0 0;">tiny</div>
<div style="position:absolute;left:38px;top:155px;width:444px;height:1257px;box-sizing:border-box;background:#fff;border:1px solid #b9b6b0"></div>
<div style="position:absolute;left:2px;top:131.5px;width:39.5px;height:62.0px;box-sizing:border-box;background:linear-gradient(90deg,#fbfaf7,#f6f4ef);border:1px solid #cdc9c2;border-right:none;border-radius:3px 0 0 3px"></div>
<div style="position:absolute;left:4px;top:194.5px;width:34.5px;height:62.0px;box-sizing:border-box;background:linear-gradient(90deg,#e8e5df,#e2dfd8);border:1px solid #cfcbc4;border-bottom-color:#b5b2ab;border-radius:3px"></div>
<div style="position:absolute;left:4px;top:257.6px;width:34.5px;height:62.0px;box-sizing:border-box;background:linear-gradient(90deg,#e8e5df,#e2dfd8);border:1px solid #cfcbc4;border-bottom-color:#b5b2ab;border-radius:3px"></div>
<div style="position:absolute;left:4px;top:320.70000000000005px;width:34.5px;height:62.0px;box-sizing:border-box;background:linear-gradient(90deg,#e8e5df,#e2dfd8);border:1px solid #cfcbc4;border-bottom-color:#b5b2ab;border-radius:3px"></div>
<div style="position:absolute;left:4px;top:383.80000000000007px;width:34.5px;height:62.0px;box-sizing:border-box;background:linear-gradient(90deg,#e8e5df,#e2dfd8);border:1px solid #cfcbc4;border-bottom-color:#b5b2ab;border-radius:3px"></div>
<div style="position:absolute;left:4px;top:446.9000000000001px;width:34.5px;height:62.0px;box-sizing:border-box;background:linear-gradient(90deg,#e8e5df,#e2dfd8);border:1px solid #cfcbc4;border-bottom-color:#b5b2ab;border-radius:3px"></div>
<div style="position:absolute;left:4px;top:510.0000000000001px;width:34.5px;height:62.0px;box-sizing:border-box;background:linear-gradient(90deg,#e8e5df,#e2dfd8);border:1px solid #cfcbc4;border-bottom-color:#b5b2ab;border-radius:3px"></div>
<div style="position:absolute;left:4px;top:573.1000000000001px;width:34.5px;height:62.0px;box-sizing:border-box;background:linear-gradient(90deg,#e8e5df,#e2dfd8);border:1px solid #cfcbc4;border-bottom-color:#b5b2ab;border-radius:3px"></div>
<div style="position:absolute;left:4px;top:636.2000000000002px;width:34.5px;height:62.0px;box-sizing:border-box;background:linear-gradient(90deg,#e8e5df,#e2dfd8);border:1px solid #cfcbc4;border-bottom-color:#b5b2ab;border-radius:3px"></div>
<div style="position:absolute;left:4px;top:699.3000000000002px;width:34.5px;height:62.0px;box-sizing:border-box;background:linear-gradient(90deg,#e8e5df,#e2dfd8);border:1px solid #cfcbc4;border-bottom-color:#b5b2ab;border-radius:3px"></div>
<div style="position:absolute;left:4px;top:762.4000000000002px;width:34.5px;height:62.0px;box-sizing:border-box;background:linear-gradient(90deg,#e8e5df,#e2dfd8);border:1px solid #cfcbc4;border-bottom-color:#b5b2ab;border-radius:3px"></div>
<div style="position:absolute;left:4px;top:825.5000000000002px;width:34.5px;height:62.0px;box-sizing:border-box;background:linear-gradient(90deg,#e8e5df,#e2dfd8);border:1px solid #cfcbc4;border-bottom-color:#b5b2ab;border-radius:3px"></div>
<div style="position:absolute;left:4px;top:888.6000000000003px;width:34.5px;height:62.0px;box-sizing:border-box;background:linear-gradient(90deg,#e8e5df,#e2dfd8);border:1px solid #cfcbc4;border-bottom-color:#b5b2ab;border-radius:3px"></div>
<svg style="position:absolute;left:0;top:0" width="45" height="960"><rect x="12" y="157" width="7.8" height="4.3" rx="0.8" fill="#fff" stroke="#555" stroke-width="1.2"/><path d="M15.7 161.3V171.2H21M15.7 165.4H21" fill="none" stroke="#555" stroke-width="1.2"/><rect x="21" y="163.4" width="7.9" height="4" rx="0.8" fill="#fff" stroke="#555" stroke-width="1.2"/><rect x="21" y="169.6" width="7.9" height="4.2" rx="0.8" fill="#fff" stroke="#555" stroke-width="1.2"/><path d="M18 220H30.5M18 222.7H24.8M20.6 227.3H30.5M20.6 229.5H24.8M22.9 234.5H30.5M22.9 236.7H24.8" stroke="#666" stroke-width="1.2"/><circle cx="14.5" cy="221.6" r="1.6" fill="#3a9ae0"/><circle cx="17.2" cy="228" r="1.6" fill="#3a9ae0"/><path d="M15.8 282H28.2V299.5L22 294.5L15.8 299.5Z" fill="#f7868e" stroke="#e8707a" stroke-width="0.8"/><path d="M13.5 348Q16 346 20 346.5H30M18 347V355Q18 360 14.5 361M25.5 347V356Q25.5 361 30.5 360" fill="none" stroke="#3a3a3a" stroke-width="1.3"/><path d="M13.5 424V412H19L21 414.5H28V417" fill="none" stroke="#777" stroke-width="1.2"/><path d="M15.5 417H31L28.5 424H13.5Z" fill="#fafafa" stroke="#777" stroke-width="1.2"/><path d="M15.5 472H13V489.5H15.5M28 472H30.5V489.5H28" fill="none" stroke="#7ec0ec" stroke-width="1.3"/><path d="M19.5 473.5Q17.5 473.5 17.5 476V479.5L16 481L17.5 482.5V486Q17.5 488 19.5 488M24 473.5Q26 473.5 26 476V479.5L27.5 481L26 482.5V486Q26 488 24 488" fill="none" stroke="#3a8fd0" stroke-width="1.2"/></svg>
<div class="t" style="left:11.62px;top:543.18px;font-family:'Liberation Sans', sans-serif;font-size:14.5px;font-weight:bold;color:#3a88c8;transform:scaleX(1.0373);transform-origin:0 0;">PS</div>
<div class="t" style="left:11.74px;top:606.18px;font-family:'Liberation Sans', sans-serif;font-size:14.5px;font-weight:bold;color:#3a88c8;transform:scaleX(0.9081);transform-origin:0 0;">MP</div>
<div class="t" style="left:12.44px;top:669.18px;font-family:'Liberation Sans', sans-serif;font-size:14.5px;font-weight:bold;color:#3a88c8;transform:scaleX(1.0767);transform-origin:0 0;">TZ</div>
<div class="t" style="left:12.25px;top:732.18px;font-family:'Liberation Sans', sans-serif;font-size:14.5px;font-weight:bold;color:#3a88c8;transform:scaleX(0.9629);transform-origin:0 0;">AS</div>
<div class="t" style="left:12.46px;top:858.18px;font-family:'Liberation Sans', sans-serif;font-size:14.5px;font-weight:bold;color:#3a88c8;transform:scaleX(0.9777);transform-origin:0 0;">XY</div>
<svg style="position:absolute;left:0;top:780" width="45" height="160"><rect x="12" y="8" width="16" height="11" fill="#fafafa" stroke="#555" stroke-width="1.3"/><path d="M15 12H24M15 15H22M20 19V23M16 23H24" stroke="#555" stroke-width="1.2"/><circle cx="27" cy="19" r="4" fill="#eaf7ea" stroke="#2e9a4e" stroke-width="1"/><path d="M26 17L29 19L26 21Z" fill="#2e9a4e"/><path d="M14 132H28L30 134V147H14Z" fill="#fafafa" stroke="#b040b0" stroke-width="1.3"/><rect x="12" y="145" width="14" height="4" fill="#d070d0"/><circle cx="29" cy="147" r="4" fill="#eaf4fb" stroke="#2d8ccd" stroke-width="1"/><path d="M28 145L30.5 147L28 149Z" fill="#2d8ccd"/></svg>
<div class="t" style="left:40.98px;top:142.57px;font-family:'Liberation Sans', sans-serif;font-size:20.3px;color:#111;transform:scaleX(1.1119);transform-origin:0 0;">Structure</div>
<svg style="position:absolute;left:0;top:0" width="490" height="420"><path d="M52 167.2H64.3L58.15 173.2Z" fill="#555"/><rect x="78.5" y="158.5" width="15.5" height="18" fill="#8fc2f0" stroke="#2a80d2" stroke-width="1.5"/><line x1="81" y1="162" x2="91.5" y2="162" stroke="#2a80d2" stroke-width="1.3"/><line x1="81" y1="165" x2="91.5" y2="165" stroke="#2a80d2" stroke-width="1.3"/><line x1="81" y1="168" x2="91.5" y2="168" stroke="#2a80d2" stroke-width="1.3"/><line x1="81" y1="171" x2="91.5" y2="171" stroke="#2a80d2" stroke-width="1.3"/><line x1="81" y1="174" x2="91.5" y2="174" stroke="#2a80d2" stroke-width="1.3"/><rect x="86" y="163" width="15.5" height="18.5" fill="#8fc2f0" stroke="#2a80d2" stroke-width="1.5"/><line x1="88.5" y1="166.5" x2="99" y2="166.5" stroke="#2a80d2" stroke-width="1.3"/><line x1="88.5" y1="169.5" x2="99" y2="169.5" stroke="#2a80d2" stroke-width="1.3"/><line x1="88.5" y1="172.5" x2="99" y2="172.5" stroke="#2a80d2" stroke-width="1.3"/><line x1="88.5" y1="175.5" x2="99" y2="175.5" stroke="#2a80d2" stroke-width="1.3"/><line x1="88.5" y1="178.5" x2="99" y2="178.5" stroke="#2a80d2" stroke-width="1.3"/><path d="M85 190.8V201.8L91.2 196.3Z" fill="#555"/><path d="M85 214.7V225.7L91.2 220.2Z" fill="#555"/><path d="M85 240V251L91.2 245.5Z" fill="#555"/><path d="M52.5 350.3H64.8L58.65 356.3Z" fill="#555"/><rect x="78.5" y="341.5" width="15.5" height="18" fill="#8fc2f0" stroke="#2a80d2" stroke-width="1.5"/><line x1="81" y1="345" x2="91.5" y2="345" stroke="#2a80d2" stroke-width="1.3"/><line x1="81" y1="348" x2="91.5" y2="348" stroke="#2a80d2" stroke-width="1.3"/><line x1="81" y1="351" x2="91.5" y2="351" stroke="#2a80d2" stroke-width="1.3"/><line x1="81" y1="354" x2="91.5" y2="354" stroke="#2a80d2" stroke-width="1.3"/><line x1="81" y1="357" x2="91.5" y2="357" stroke="#2a80d2" stroke-width="1.3"/><rect x="86" y="346" width="15.5" height="18.5" fill="#8fc2f0" stroke="#2a80d2" stroke-width="1.5"/><line x1="88.5" y1="349.5" x2="99" y2="349.5" stroke="#2a80d2" stroke-width="1.3"/><line x1="88.5" y1="352.5" x2="99" y2="352.5" stroke="#2a80d2" stroke-width="1.3"/><line x1="88.5" y1="355.5" x2="99" y2="355.5" stroke="#2a80d2" stroke-width="1.3"/><line x1="88.5" y1="358.5" x2="99" y2="358.5" stroke="#2a80d2" stroke-width="1.3"/><line x1="88.5" y1="361.5" x2="99" y2="361.5" stroke="#2a80d2" stroke-width="1.3"/><path d="M85 374V385L91.2 379.5Z" fill="#555"/></svg>
<div style="position:absolute;left:43px;top:286px;width:438px;height:26.6px;background:#4a8fd9"></div>
<svg style="position:absolute;left:111px;top:288px" width="18" height="23"><path d="M1 1H11L16.5 6.5V21.5H1Z" fill="#75aee6" stroke="#86b9ea" stroke-width="1"/><path d="M11 1V6.5H16.5" fill="none" stroke="#a9cdf0" stroke-width="1"/></svg>
<div class="t" style="left:110.86px;top:245.16px;font-family:'Liberation Sans', sans-serif;font-size:18px;color:#333;transform:scaleX(1.1409);transform-origin:0 0;">H</div>
<div class="t" style="left:121.64px;top:247.59px;font-family:'Liberation Sans', sans-serif;font-size:11px;color:#2d8ccd;transform:scaleX(1.0449);transform-origin:0 0;">1</div>
<div class="t" style="left:110.86px;top:272.06px;font-family:'Liberation Sans', sans-serif;font-size:18px;color:#333;transform:scaleX(1.1409);transform-origin:0 0;">H</div>
<div class="t" style="left:121.64px;top:274.49px;font-family:'Liberation Sans', sans-serif;font-size:11px;color:#2d8ccd;transform:scaleX(1.0449);transform-origin:0 0;">1</div>
<div class="t" style="left:110.86px;top:325.76px;font-family:'Liberation Sans', sans-serif;font-size:18px;color:#333;transform:scaleX(1.1409);transform-origin:0 0;">H</div>
<div class="t" style="left:121.64px;top:328.19px;font-family:'Liberation Sans', sans-serif;font-size:11px;color:#2d8ccd;transform:scaleX(1.0449);transform-origin:0 0;">1</div>
<div class="t" style="left:110.86px;top:404.66px;font-family:'Liberation Sans', sans-serif;font-size:18px;color:#333;transform:scaleX(1.1409);transform-origin:0 0;">H</div>
<div class="t" style="left:121.95px;top:407.09px;font-family:'Liberation Sans', sans-serif;font-size:11px;color:#2d8ccd;">2</div>
<div class="t" style="left:110.50px;top:169.07px;font-family:'Liberation Sans', sans-serif;font-size:20.3px;color:#111;transform:scaleX(1.1027);transform-origin:0 0;">document.tex</div>
<div class="t" style="left:106.83px;top:194.67px;font-family:'Liberation Sans', sans-serif;font-size:20.3px;color:#111;transform:scaleX(0.9690);transform-origin:0 0;">LABELS</div>
<div class="t" style="left:108.00px;top:218.77px;font-family:'Liberation Sans', sans-serif;font-size:20.3px;color:#111;transform:scaleX(0.9817);transform-origin:0 0;">TODO</div>
<div class="t" style="left:141.06px;top:243.87px;font-family:'Liberation Sans', sans-serif;font-size:20.3px;color:#111;transform:scaleX(1.1169);transform-origin:0 0;">first section</div>
<div class="t" style="left:139.94px;top:271.27px;font-family:'Liberation Sans', sans-serif;font-size:20.3px;color:#111;transform:scaleX(1.0856);transform-origin:0 0;">second section</div>
<div class="t" style="left:139.18px;top:297.87px;font-family:'Liberation Sans', sans-serif;font-size:20.3px;color:#fff;transform:scaleX(1.0786);transform-origin:0 0;">includedFile</div>
<div class="t" style="left:140.60px;top:324.97px;font-family:'Liberation Sans', sans-serif;font-size:20.3px;color:#111;transform:scaleX(1.0681);transform-origin:0 0;">Appendix</div>
<div class="t" style="left:109.17px;top:351.87px;font-family:'Liberation Sans', sans-serif;font-size:20.3px;font-weight:bold;color:#000;transform:scaleX(1.1505);transform-origin:0 0;">includedFile.tex</div>
<div class="t" style="left:106.83px;top:377.57px;font-family:'Liberation Sans', sans-serif;font-size:20.3px;color:#111;transform:scaleX(0.9690);transform-origin:0 0;">LABELS</div>
<div class="t" style="left:140.26px;top:403.37px;font-family:'Liberation Sans', sans-serif;font-size:20.3px;color:#111;transform:scaleX(1.1010);transform-origin:0 0;">first subsection included</div>
<svg style="position:absolute;left:486px;top:760px" width="4" height="30"><rect x="0.5" y="2.0" width="1.5" height="1.5" fill="#aaa"/><rect x="0.5" y="6.5" width="1.5" height="1.5" fill="#aaa"/><rect x="0.5" y="11.0" width="1.5" height="1.5" fill="#aaa"/><rect x="0.5" y="15.5" width="1.5" height="1.5" fill="#aaa"/><rect x="0.5" y="20.0" width="1.5" height="1.5" fill="#aaa"/><rect x="0.5" y="24.5" width="1.5" height="1.5" fill="#aaa"/></svg>
<div style="position:absolute;left:492px;top:128px;width:870px;height:49px;background:#f5f1ec"></div>
<div style="position:absolute;left:699px;top:175.5px;width:663px;height:1.5px;background:#bdb9b2"></div>
<div style="position:absolute;left:492.5px;top:131.5px;width:206.5px;height:46px;box-sizing:border-box;background:linear-gradient(#fcfbf9,#f8f6f2);border:1px solid #c6c2bb;border-bottom:none;border-radius:3px 3px 0 0"></div>
<div class="t" style="left:510.01px;top:154.67px;font-family:'Liberation Sans', sans-serif;font-size:20.3px;color:#a6a6a6;transform:scaleX(1.1002);transform-origin:0 0;">document.tex</div>
<svg style="position:absolute;left:655.5px;top:144.5px" width="21" height="21"><rect x="0.75" y="0.75" width="19.5" height="19.5" rx="2" fill="#ec8a6e" stroke="#dc5a44" stroke-width="1.5"/><path d="M6 6L15 15M15 6L6 15" stroke="#fff" stroke-width="2"/></svg>
<div style="position:absolute;left:492px;top:178px;width:870px;height:733px;background:#fff"></div>
<div style="position:absolute;left:492px;top:178px;width:93px;height:733px;background:#f5f1ea"></div>
<div style="position:absolute;left:585px;top:179.5px;width:777px;height:25.8px;background:#ececfb"></div>
<div style="position:absolute;left:591px;top:314px;width:1.6px;height:27px;background:#c8c8c8"></div>
<div class="t" style="left:545.72px;top:193.07px;font-family:'Liberation Sans', sans-serif;font-size:20.3px;font-weight:bold;color:#000;transform:scaleX(1.0481);transform-origin:0 0;">1</div>
<div class="t" style="left:545.41px;top:220.27px;font-family:'Liberation Sans', sans-serif;font-size:20.3px;color:#111;transform:scaleX(1.0718);transform-origin:0 0;">2</div>
<div class="t" style="left:545.67px;top:247.47px;font-family:'Liberation Sans', sans-serif;font-size:20.3px;color:#111;transform:scaleX(1.0267);transform-origin:0 0;">3</div>
<div class="t" style="left:546.11px;top:274.67px;font-family:'Liberation Sans', sans-serif;font-size:20.3px;color:#111;transform:scaleX(0.9562);transform-origin:0 0;">4</div>
<div class="t" style="left:545.67px;top:301.87px;font-family:'Liberation Sans', sans-serif;font-size:20.3px;color:#111;transform:scaleX(1.0267);transform-origin:0 0;">5</div>
<div class="t" style="left:545.44px;top:329.07px;font-family:'Liberation Sans', sans-serif;font-size:20.3px;color:#111;transform:scaleX(1.0488);transform-origin:0 0;">6</div>
<div class="t" style="left:545.41px;top:356.27px;font-family:'Liberation Sans', sans-serif;font-size:20.3px;color:#111;transform:scaleX(1.0718);transform-origin:0 0;">7</div>
<div class="t" style="left:545.55px;top:383.47px;font-family:'Liberation Sans', sans-serif;font-size:20.3px;color:#111;transform:scaleX(1.0376);transform-origin:0 0;">8</div>
<div class="t" style="left:545.54px;top:410.67px;font-family:'Liberation Sans', sans-serif;font-size:20.3px;color:#111;transform:scaleX(1.0488);transform-origin:0 0;">9</div>
<div class="t" style="left:534.36px;top:437.87px;font-family:'Liberation Sans', sans-serif;font-size:20.3px;color:#111;transform:scaleX(1.0148);transform-origin:0 0;">10</div>
<div class="t" style="left:534.21px;top:465.07px;font-family:'Liberation Sans', sans-serif;font-size:20.3px;color:#111;transform:scaleX(1.1090);transform-origin:0 0;">11</div>
<div class="t" style="left:534.33px;top:492.27px;font-family:'Liberation Sans', sans-serif;font-size:20.3px;color:#111;transform:scaleX(1.0302);transform-origin:0 0;">12</div>
<div class="t" style="left:534.35px;top:519.47px;font-family:'Liberation Sans', sans-serif;font-size:20.3px;color:#111;transform:scaleX(1.0199);transform-origin:0 0;">13</div>
<div class="t" style="left:534.37px;top:546.67px;font-family:'Liberation Sans', sans-serif;font-size:20.3px;color:#111;transform:scaleX(1.0047);transform-origin:0 0;">14</div>
<div class="t" style="left:534.35px;top:573.87px;font-family:'Liberation Sans', sans-serif;font-size:20.3px;color:#111;transform:scaleX(1.0199);transform-origin:0 0;">15</div>
<svg style="position:absolute;left:563px;top:243.3px" width="14" height="8"><path d="M0 0H13L6.5 7Z" fill="#9d9b98"/></svg>
<svg style="position:absolute;left:563px;top:297.7px" width="14" height="8"><path d="M0 0H13L6.5 7Z" fill="#9d9b98"/></svg>
<svg style="position:absolute;left:563px;top:352.1px" width="14" height="8"><path d="M0 0H13L6.5 7Z" fill="#9d9b98"/></svg>
<svg style="position:absolute;left:563px;top:406.5px" width="14" height="8"><path d="M0 0H13L6.5 7Z" fill="#9d9b98"/></svg>
<svg style="position:absolute;left:563px;top:488.1px" width="14" height="8"><path d="M0 0H13L6.5 7Z" fill="#9d9b98"/></svg>
<div class="t" style="left:592.6px;top:191.80px;font-family:'Liberation Mono', monospace;font-size:19.5px"><span style="color:#8e1a1a;">\documentclass</span><span style="color:#1a1a3a;">[]</span><span style="color:#eca23a;">{</span><span style="color:#1f8a2a;">article</span><span style="color:#eca23a;">}</span></div>
<div class="t" style="left:592.6px;top:246.20px;font-family:'Liberation Mono', monospace;font-size:19.5px"><span style="color:#1a8ae2;">\</span><span style="color:#1a8ae2;font-weight:bold;">begin</span><span style="color:#eca23a;">{</span><span style="color:#0c0c80;font-weight:bold;">document</span><span style="color:#eca23a;">}</span></div>
<div class="t" style="left:592.6px;top:300.60px;font-family:'Liberation Mono', monospace;font-size:19.5px"><span style="color:#1a8ae2;">\</span><span style="color:#1a8ae2;font-weight:bold;">section</span><span style="color:#eca23a;">{</span><span style="color:#111;font-weight:bold;">first section</span><span style="color:#eca23a;">}</span><span style="color:#8e1a1a;">\label</span><span style="color:#eca23a;">{</span><span style="color:#1f8a2a;">sec:first-section</span><span style="color:#eca23a;">}</span></div>
<div class="t" style="left:592.6px;top:355.00px;font-family:'Liberation Mono', monospace;font-size:19.5px"><span style="color:#1a8ae2;">\</span><span style="color:#1a8ae2;font-weight:bold;">subsection</span><span style="color:#eca23a;">{</span><span style="color:#111;font-weight:bold;">first subsection</span><span style="color:#eca23a;">}</span></div>
<div style="position:absolute;left:592.2px;top:370px;width:222.8px;height:26.8px;background:#a5d07f"></div>
<div class="t" style="left:592.6px;top:383.20px;font-family:'Liberation Mono', monospace;font-size:19.5px"><span style="color:#708870;">%TODO fix something</span></div>
<div class="t" style="left:592.6px;top:409.40px;font-family:'Liberation Mono', monospace;font-size:19.5px"><span style="color:#1a8ae2;">\</span><span style="color:#1a8ae2;font-weight:bold;">section</span><span style="color:#eca23a;">{</span><span style="color:#111;font-weight:bold;">second section</span><span style="color:#eca23a;">}</span></div>
<div class="t" style="left:592.6px;top:436.60px;font-family:'Liberation Mono', monospace;font-size:19.5px"><span style="color:#8e1a1a;">\include</span><span style="color:#eca23a;">{</span><span style="color:#111;">includedFile</span><span style="color:#eca23a;">}</span></div>
<div class="t" style="left:592.6px;top:463.80px;font-family:'Liberation Mono', monospace;font-size:19.5px"><span style="color:#8e1a1a;">\appendix</span></div>
<div class="t" style="left:592.6px;top:491.00px;font-family:'Liberation Mono', monospace;font-size:19.5px"><span style="color:#1a8ae2;">\</span><span style="color:#1a8ae2;font-weight:bold;">section</span><span style="color:#eca23a;">{</span><span style="color:#111;font-weight:bold;">Appendix</span><span style="color:#eca23a;">}</span></div>
<div class="t" style="left:592.6px;top:545.40px;font-family:'Liberation Mono', monospace;font-size:19.5px"><span style="color:#1a8ae2;">\</span><span style="color:#1a8ae2;font-weight:bold;">end</span><span style="color:#eca23a;">{</span><span style="color:#0c0c80;font-weight:bold;">document</span><span style="color:#eca23a;">}</span></div>
<div class="t" style="left:505.63px;top:926.47px;font-family:'Liberation Sans', sans-serif;font-size:20.3px;color:#111;transform:scaleX(1.0897);transform-origin:0 0;">Line: 1</div>
<div class="t" style="left:596.40px;top:926.47px;font-family:'Liberation Sans', sans-serif;font-size:20.3px;color:#111;transform:scaleX(1.0822);transform-origin:0 0;">Column: 0</div>
<div class="t" style="left:795.28px;top:926.47px;font-family:'Liberation Sans', sans-serif;font-size:20.3px;color:#111;transform:scaleX(0.9421);transform-origin:0 0;">INSERT</div>
<div style="position:absolute;left:1362px;top:131px;width:1.6px;height:810px;background:#4a4a4a"></div>
<div style="position:absolute;left:1587px;top:175.5px;width:643px;height:1.5px;background:#bdb9b2"></div>
<div style="position:absolute;left:1364px;top:131.5px;width:223px;height:46px;box-sizing:border-box;background:linear-gradient(#fefefd,#fbfaf8);border:1px solid #c6c2bb;border-left:none;border-bottom:none;border-radius:0 3px 0 0"></div>
<div class="t" style="left:1380.77px;top:154.17px;font-family:'Liberation Sans', sans-serif;font-size:20.3px;color:#111;transform:scaleX(1.0805);transform-origin:0 0;">includedFile.tex</div>
<svg style="position:absolute;left:1543.5px;top:144.5px" width="21" height="21"><rect x="0.75" y="0.75" width="19.5" height="19.5" rx="2" fill="#ec8a6e" stroke="#dc5a44" stroke-width="1.5"/><path d="M6 6L15 15M15 6L6 15" stroke="#fff" stroke-width="2"/></svg>
<div style="position:absolute;left:1364px;top:178px;width:866px;height:733px;background:#fff"></div>
<div style="position:absolute;left:1364px;top:178px;width:90px;height:733px;background:#f5f1ea"></div>
<div style="position:absolute;left:1454px;top:179px;width:776px;height:26.5px;background:#ececfb"></div>
<div class="t" style="left:1417.85px;top:193.27px;font-family:'Liberation Sans', sans-serif;font-size:20.3px;font-weight:bold;color:#000;transform:scaleX(0.9433);transform-origin:0 0;">1</div>
<svg style="position:absolute;left:1434.5px;top:189px" width="14" height="8"><path d="M0 0H13L6.5 7Z" fill="#9d9b98"/></svg>
<div class="t" style="left:1464px;top:191.80px;font-family:'Liberation Mono', monospace;font-size:19.5px"><span style="color:#1a8ae2;">\</span><span style="color:#1a8ae2;font-weight:bold;">subsection</span><span style="color:#eca23a;">{</span><span style="color:#111;font-weight:bold;">first subsection included</span><span style="color:#eca23a;">}</span><span style="color:#111;"> </span><span style="color:#8e1a1a;">\label</span><span style="color:#eca23a;">{</span><span style="color:#1f8a2a;">sec:included</span><span style="color:#eca23a;">}</span></div>
<div class="t" style="left:1376.23px;top:926.47px;font-family:'Liberation Sans', sans-serif;font-size:20.3px;color:#111;transform:scaleX(1.0897);transform-origin:0 0;">Line: 1</div>
<div class="t" style="left:1467.09px;top:926.47px;font-family:'Liberation Sans', sans-serif;font-size:20.3px;color:#111;transform:scaleX(1.0954);transform-origin:0 0;">Column: 0</div>
<div class="t" style="left:1665.97px;top:926.47px;font-family:'Liberation Sans', sans-serif;font-size:20.3px;color:#111;transform:scaleX(0.9476);transform-origin:0 0;">INSERT</div>
<div style="position:absolute;left:492px;top:940px;width:1738px;height:1.4px;background:#3c3c3c"></div>
<div style="position:absolute;left:630.4px;top:950.5px;width:481.6px;height:34.5px;box-sizing:border-box;background:linear-gradient(#eae7e1,#e3e0da);border:1px solid #c9c5be;border-bottom:none;border-radius:3px 3px 0 0"></div>
<div style="position:absolute;left:702px;top:951px;width:1px;height:34px;background:#c9c5be"></div>
<div style="position:absolute;left:814.8px;top:951px;width:1px;height:34px;background:#c9c5be"></div>
<div style="position:absolute;left:933.3px;top:951px;width:1px;height:34px;background:#c9c5be"></div>
<div style="position:absolute;left:498.4px;top:947.3px;width:132px;height:37.7px;box-sizing:border-box;background:linear-gradient(#fbfaf7,#f6f4ef);border:1px solid #c9c5be;border-bottom:none;border-radius:3px 3px 0 0"></div>
<div class="t" style="left:514.71px;top:967.37px;font-family:'Liberation Sans', sans-serif;font-size:20.3px;color:#111;transform:scaleX(1.0417);transform-origin:0 0;">Messages</div>
<div class="t" style="left:647.26px;top:969.27px;font-family:'Liberation Sans', sans-serif;font-size:20.3px;color:#111;transform:scaleX(1.0695);transform-origin:0 0;">Log</div>
<div class="t" style="left:719.10px;top:969.27px;font-family:'Liberation Sans', sans-serif;font-size:20.3px;color:#111;transform:scaleX(1.0447);transform-origin:0 0;">Preview</div>
<div class="t" style="left:832.06px;top:969.27px;font-family:'Liberation Sans', sans-serif;font-size:20.3px;color:#111;transform:scaleX(1.0840);transform-origin:0 0;">Terminal</div>
<div class="t" style="left:950.75px;top:969.27px;font-family:'Liberation Sans', sans-serif;font-size:20.3px;color:#111;transform:scaleX(1.0411);transform-origin:0 0;">Search Results</div>
<svg style="position:absolute;left:2197px;top:957px" width="21" height="21"><circle cx="10.5" cy="10.5" r="8.8" fill="#f28c96" stroke="#d8505c" stroke-width="1.2"/><path d="M7 7L14 14M14 7L7 14" stroke="#fff" stroke-width="1.8"/></svg>
<div style="position:absolute;left:492px;top:985px;width:1738px;height:8.3px;background:#f5f1ec"></div>
<div style="position:absolute;left:492px;top:993.3px;width:1738px;height:5.5px;background:#fdfdfb"></div>
<div style="position:absolute;left:492px;top:998.5px;width:1738px;height:26px;background:linear-gradient(#f6f6f6,#e6e8e9 12%,#e7e7e7 80%,#f4f4f4 96%,#fdfdfd)"></div>
<div style="position:absolute;left:492px;top:1024.5px;width:1738px;height:389.5px;background:#fefefe"></div>
<div style="position:absolute;left:2px;top:1414px;width:2228px;height:36px;background:#f5f1ec"></div>
<svg style="position:absolute;left:1560px;top:1424px" width="55" height="22"><path d="M3 17L8 12" stroke="#222" stroke-width="1.8"/><path d="M7 9.5L12.5 4.5L15 7L10 12.5Z" fill="#222"/><path d="M12.5 7L17.5 2M15 9.5L19 5.5" stroke="#222" stroke-width="1.3"/><text x="30" y="11" font-family="Liberation Sans" font-size="11" fill="#999">abc</text><path d="M31 14L35 18L39 14L43 18L47 14" fill="none" stroke="#aaa" stroke-width="1.1"/></svg>
<div class="t" style="left:1637.40px;top:1434.97px;font-family:'Liberation Sans', sans-serif;font-size:20.3px;color:#111;transform:scaleX(0.9836);transform-origin:0 0;">en_US</div>
<div class="t" style="left:1737.05px;top:1434.97px;font-family:'Liberation Sans', sans-serif;font-size:20.3px;color:#111;transform:scaleX(1.0161);transform-origin:0 0;">UTF-8</div>
<div class="t" style="left:1834.01px;top:1434.97px;font-family:'Liberation Sans', sans-serif;font-size:20.3px;color:#111;transform:scaleX(1.0396);transform-origin:0 0;">Ready</div>
<div class="t" style="left:1918.00px;top:1434.97px;font-family:'Liberation Sans', sans-serif;font-size:20.3px;color:#111;transform:scaleX(1.1011);transform-origin:0 0;">Automatic</div>
<svg style="position:absolute;left:1700px;top:1440px" width="125" height="10"><path d="M4 2.5H14L9 7.5Z" fill="#555"/><path d="M108.4 2.5H118.4L113.4 7.5Z" fill="#555"/></svg>
<svg style="position:absolute;left:2040px;top:1424px" width="150" height="22"><path d="M10.5 2H23.5V18L17.0 13L10.5 18Z" fill="#f58c94" stroke="#e0606a" stroke-width="1"/><text x="13.7" y="11.5" font-family="Liberation Sans" font-size="10.5" fill="#4a70c0">1</text><path d="M68.30000000000018 2H81.30000000000018V18L74.80000000000018 13L68.30000000000018 18Z" fill="#f58c94" stroke="#e0606a" stroke-width="1"/><text x="71.50000000000018" y="11.5" font-family="Liberation Sans" font-size="10.5" fill="#4a70c0">2</text><path d="M125 2H138V18L131.5 13L125 18Z" fill="#f58c94" stroke="#e0606a" stroke-width="1"/><text x="128.2" y="11.5" font-family="Liberation Sans" font-size="10.5" fill="#4a70c0">3</text></svg>
<svg style="position:absolute;left:2214px;top:1436px" width="16" height="14"><rect x="12" y="3" width="1.5" height="1.5" fill="#bbb"/><rect x="8" y="7" width="1.5" height="1.5" fill="#bbb"/><rect x="12" y="7" width="1.5" height="1.5" fill="#bbb"/><rect x="4" y="11" width="1.5" height="1.5" fill="#bbb"/><rect x="8" y="11" width="1.5" height="1.5" fill="#bbb"/><rect x="12" y="11" width="1.5" height="1.5" fill="#bbb"/></svg>
<div style="position:absolute;left:4px;top:1420px;width:33px;height:30px;box-sizing:border-box;background:#e3e0da;border:1px solid #c4c0b9;border-radius:3px"></div>
<div style="position:absolute;left:46px;top:1420px;width:33px;height:30px;box-sizing:border-box;background:#e3e0da;border:1px solid #c4c0b9;border-radius:3px"></div>
<svg style="position:absolute;left:0;top:1420px" width="90" height="30"><rect x="12" y="6" width="16" height="17" fill="#fff" stroke="#444" stroke-width="1.3"/><rect x="12.7" y="6.7" width="5" height="15.6" fill="#7ab8ec"/><rect x="17.7" y="17" width="10" height="5.3" fill="#444"/><rect x="54" y="6" width="16" height="17" fill="#fff" stroke="#444" stroke-width="1.3"/><rect x="54.7" y="6.7" width="5" height="15.6" fill="#444"/><rect x="59.7" y="17" width="10" height="5.3" fill="#7ab8ec"/></svg>
</body></html>
